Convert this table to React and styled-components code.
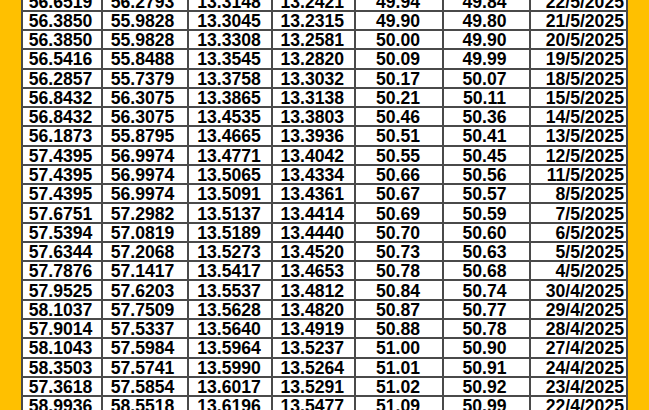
import React from "react";
import styled, { createGlobalStyle } from "styled-components";

const rows = [
  ["56.6519", "56.2793", "13.3148", "13.2421", "49.94", "49.84", "22/5/2025"],
  ["56.3850", "55.9828", "13.3045", "13.2315", "49.90", "49.80", "21/5/2025"],
  ["56.3850", "55.9828", "13.3308", "13.2581", "50.00", "49.90", "20/5/2025"],
  ["56.5416", "55.8488", "13.3545", "13.2820", "50.09", "49.99", "19/5/2025"],
  ["56.2857", "55.7379", "13.3758", "13.3032", "50.17", "50.07", "18/5/2025"],
  ["56.8432", "56.3075", "13.3865", "13.3138", "50.21", "50.11", "15/5/2025"],
  ["56.8432", "56.3075", "13.4535", "13.3803", "50.46", "50.36", "14/5/2025"],
  ["56.1873", "55.8795", "13.4665", "13.3936", "50.51", "50.41", "13/5/2025"],
  ["57.4395", "56.9974", "13.4771", "13.4042", "50.55", "50.45", "12/5/2025"],
  ["57.4395", "56.9974", "13.5065", "13.4334", "50.66", "50.56", "11/5/2025"],
  ["57.4395", "56.9974", "13.5091", "13.4361", "50.67", "50.57", "8/5/2025"],
  ["57.6751", "57.2982", "13.5137", "13.4414", "50.69", "50.59", "7/5/2025"],
  ["57.5394", "57.0819", "13.5189", "13.4440", "50.70", "50.60", "6/5/2025"],
  ["57.6344", "57.2068", "13.5273", "13.4520", "50.73", "50.63", "5/5/2025"],
  ["57.7876", "57.1417", "13.5417", "13.4653", "50.78", "50.68", "4/5/2025"],
  ["57.9525", "57.6203", "13.5537", "13.4812", "50.84", "50.74", "30/4/2025"],
  ["58.1037", "57.7509", "13.5628", "13.4820", "50.87", "50.77", "29/4/2025"],
  ["57.9014", "57.5337", "13.5640", "13.4919", "50.88", "50.78", "28/4/2025"],
  ["58.1043", "57.5984", "13.5964", "13.5237", "51.00", "50.90", "27/4/2025"],
  ["58.3503", "57.5741", "13.5990", "13.5264", "51.01", "50.91", "24/4/2025"],
  ["57.3618", "57.5854", "13.6017", "13.5291", "51.02", "50.92", "23/4/2025"],
  ["58.9936", "58.5518", "13.6196", "13.5477", "51.09", "50.99", "22/4/2025"],
];

// widths measured line to line, plus how each column sits in its cell
const columns = [
  { width: 80.2, align: "center", pad: 2 },
  { width: 86.6, align: "center", pad: 5 },
  { width: 83.4, align: "center", pad: 2 },
  { width: 83.3, align: "center", pad: 2 },
  { width: 88, align: "center", pad: 2 },
  { width: 87, align: "center", pad: 4 },
  { width: 97, align: "right", pad: 2 },
];

const GlobalStyle = createGlobalStyle`
  html, body {
    margin: 0;
    padding: 0;
    height: 410px;
    overflow: hidden;
    background: #ffc000;
  }
`;

const Page = styled.div`
  width: 649px;
  height: 410px;
  overflow: hidden;
  background: #ffc000;
  padding-left: 20.5px;
  box-sizing: border-box;
`;

const Sheet = styled.table`
  border-collapse: collapse;
  table-layout: fixed;
  width: 605.5px;
  margin-top: -9.5px;
  background: #ffffff;
  font-family: "Liberation Sans", Arial, sans-serif;
  font-weight: bold;
  font-size: 17.6px;
  color: #000;
`;

const Col = styled.col`
  width: ${(p) => p.$w}px;
`;

const Row = styled.tr`
  height: 19.27px;
`;

const Cell = styled.td`
  border: 2px solid #4a4a4a;
  padding: 1px ${(p) => p.$pad}px 0 0;
  line-height: 16px;
  text-align: ${(p) => p.$align};
  white-space: nowrap;
  overflow: hidden;
`;

export default function App() {
  return (
    <Page>
      <GlobalStyle />
      <Sheet>
        <colgroup>
          {columns.map((c, i) => (
            <Col key={i} $w={c.width} />
          ))}
        </colgroup>
        <tbody>
          {rows.map((r, i) => (
            <Row key={i}>
              {r.map((v, j) => (
                <Cell key={j} $align={columns[j].align} $pad={columns[j].pad}>
                  {v}
                </Cell>
              ))}
            </Row>
          ))}
        </tbody>
      </Sheet>
    </Page>
  );
}
